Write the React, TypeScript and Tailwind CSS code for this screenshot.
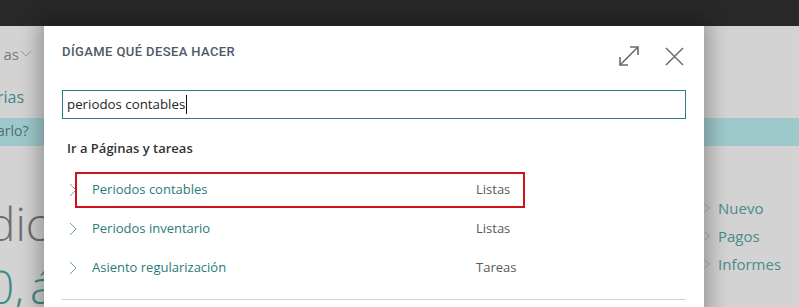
import React from "react";

const font = { fontFamily: '"Open Sans", "Noto Sans", sans-serif' };

function Chevron({ className = "" }: { className?: string }) {
  return (
    <svg width="8" height="14" viewBox="0 0 8 14" className={className} fill="none">
      <path d="M1 1 L7 7 L1 13" stroke="currentColor" strokeWidth="1" />
    </svg>
  );
}

const rows = [
  { name: "Periodos contables", type: "Listas" },
  { name: "Periodos inventario", type: "Listas" },
  { name: "Asiento regularización", type: "Tareas" },
];

export default function App() {
  return (
    <div className="relative w-[799px] h-[307px] overflow-hidden bg-[#d3d3d3]" style={font}>
      {/* top bar */}
      <div className="h-[26px] bg-[#282828]" />

      {/* background page */}
      <div className="flex flex-col">
        <div className="h-[92px] flex">
          <div className="w-[60px] flex flex-col items-end pr-[28px]">
            <div className="mt-[18px] flex items-center gap-[2px] text-[15px] text-[#7a7a7a] leading-[20px]">
              <span className="-mr-[1px]">as</span>
              <svg width="12" height="8" viewBox="0 0 12 8" fill="none">
                <path d="M1 1 L6 6 L11 1" stroke="#9a9a9a" strokeWidth="1" />
              </svg>
            </div>
          </div>
        </div>
        <div className="h-[28px] bg-[#9ec9ca]" />
      </div>

      {/* left background fragments */}
      <div className="absolute left-[-3px] top-[86px] text-[16px] leading-[22px] text-[#3e8687]">rias</div>
      <div className="absolute left-[-3px] top-[121px] text-[14px] leading-[20px] text-[#4f6e70]">arlo?</div>
      <div className="absolute left-[-12px] top-[195px] text-[46px] font-light leading-[56px] text-[#6e6e6e]">dic</div>
      <div className="absolute left-[-12px] top-[258px] text-[46px] font-light leading-[56px] text-[#3e8a8a] [word-spacing:-6px]">0, á</div>

      {/* right background fragments */}
      <div className="absolute left-[704px] top-[194px] flex flex-col text-[15px] leading-[28px] text-[#4d8a8b]">
        {["Nuevo", "Pagos", "Informes"].map((t) => (
          <div key={t} className="flex items-center gap-[8px]">
            <Chevron className="text-[#7fa5a5] w-[6px] h-[10px]" />
            <span>{t}</span>
          </div>
        ))}
      </div>

      {/* dialog */}
      <div className="absolute left-[44px] top-[26px] w-[660px] h-[290px] bg-white shadow-[0_0_18px_6px_rgba(0,0,0,0.28)] px-[18px]">
        <div className="h-[52px] flex items-center justify-between">
          <div
            className="text-[13px] font-medium tracking-[0.4px] text-[#4f5967] uppercase"
            style={{ fontFamily: "Roboto, sans-serif" }}
          >
            DÍGAME QUÉ DESEA HACER
          </div>
          <div className="flex items-center gap-[25px] mt-[8px] mr-[2px]">
            <svg width="22" height="22" viewBox="0 0 22 22" fill="none" stroke="#6b6b6b" strokeWidth="1.6">
              <path d="M2 20 L20 2" />
              <path d="M12 2 H20 V10" />
              <path d="M2 12 V20 H10" />
            </svg>
            <svg width="19" height="19" viewBox="0 0 19 19" fill="none" stroke="#6b6b6b" strokeWidth="1.5">
              <path d="M1 1 L18 18 M18 1 L1 18" />
            </svg>
          </div>
        </div>

        <div className="mt-[12px] h-[29px] border border-[#2a7d84] flex items-center pl-[4px] text-[13.3px] text-[#262626]">
          <span>periodos contables</span>
          <span className="inline-block w-[1px] h-[19px] bg-[#111] ml-[1px]" />
        </div>

        <div className="mt-[21px] h-[18px] flex items-center pl-[5px] text-[13px] font-semibold text-[#333]">
          Ir a Páginas y tareas
        </div>

        <div className="relative mt-[12px] flex flex-col">
          {rows.map((r) => (
            <div key={r.name} className="h-[39px] flex items-center text-[13px]">
              <Chevron className="ml-[7px] text-[#6aa3a3]" />
              <span className="ml-[15px] w-[384px] text-[#2a7b7c]">{r.name}</span>
              <span className="text-[#5a5a5a]">{r.type}</span>
            </div>
          ))}
          <div className="absolute left-[13px] top-[2px] w-[450px] h-[36px] border-2 border-[#cc1421]" />
        </div>

        <div className="mt-[12px] h-[1px] bg-[#d4d4d4]" />
      </div>
    </div>
  );
}
